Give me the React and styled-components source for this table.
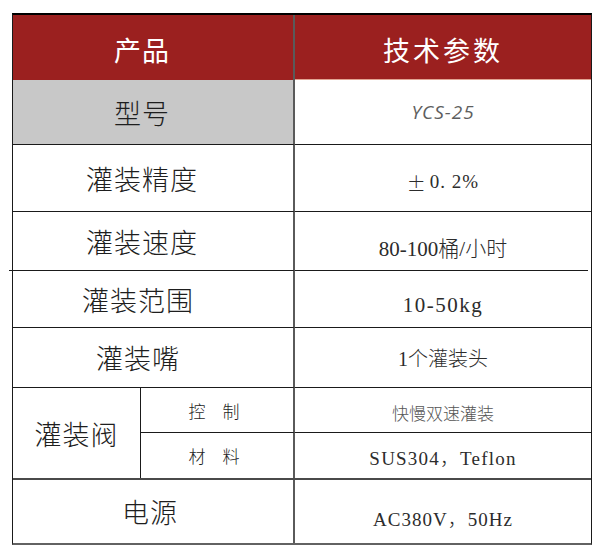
import React from 'react'
import styled, { createGlobalStyle } from 'styled-components'

const GlobalStyle = createGlobalStyle`
  html, body {
    margin: 0;
    padding: 0;
    background: #ffffff;
  }
  body {
    font-family: "Noto Sans CJK SC", "Noto Sans", sans-serif;
  }
`

const colors = {
  red: '#9b201f',
  gray: '#c8c8c8',
  divider: '#5a5a5a',
  line: '#1a1a1a',
  text: '#1e1e1e',
}

const rows = [
  { label: '灌装精度', sign: '±', value: '0. 2%', h: 67, size: 19, spacing: 1, shift: 22, dy: 4 },
  { label: '灌装速度', value: '80-100桶/小时', h: 59, size: 21, spacing: 0, shift: 22, dy: 5, tick: true },
  { label: '灌装范围', value: '10-50kg', h: 57, size: 21, spacing: 1.5, shift: 30, dy: 6 },
  { label: '灌装嘴', value: '1个灌装头', h: 60, size: 20, spacing: 0, shift: 30, dy: 0 },
]

const App = () => {
  return (
    <Page>
      <GlobalStyle />
      <Table>
        <HeadCell $span={2} $divider>
          <HeadText $shift={22}>产品</HeadText>
        </HeadCell>
        <HeadCell>
          <HeadText $spacing={3}>技术参数</HeadText>
        </HeadCell>

        <Label $span={2} $h={65} $shift={22} $bg={colors.gray}>型号</Label>
        <Value $h={65} $model>YCS-25</Value>

        {rows.map(row => (
          <React.Fragment key={row.label}>
            <Label $span={2} $h={row.h} $shift={row.shift} $tick={row.tick}>{row.label}</Label>
            <Value $h={row.h} $size={row.size} $spacing={row.spacing} $dy={row.dy} $short={row.tick}>
              {row.sign && <Sign>{row.sign}</Sign>}
              {row.value}
            </Value>
          </React.Fragment>
        ))}

        <ValveGroup>
          <Label $h={90} $grey>灌装阀</Label>
          <SubRows>
            <SubRow>
              <SubLabel>控　制</SubLabel>
              <Value $h={45} $size={17} $muted $dy={2}>快慢双速灌装</Value>
            </SubRow>
            <SubRow $grey>
              <SubLabel>材　料</SubLabel>
              <Value $h={45} $size={19} $spacing={1.2} $dy={1}>SUS304，Teflon</Value>
            </SubRow>
          </SubRows>
        </ValveGroup>

        <Label $span={2} $h={63} $shift={6} $last>电源</Label>
        <Value $h={63} $size={19} $spacing={1} $dy={6} $last>AC380V，50Hz</Value>
      </Table>
    </Page>
  )
}

export default App

const Page = styled.div`
  width: 612px;
  height: 552px;
  padding: 13px 0 0 12px;
  box-sizing: border-box;
`

const Table = styled.div`
  width: 580px;
  display: grid;
  grid-template-columns: 128px 154px 1fr;
  border-top: 2px solid #000;
  border-left: 1px solid ${colors.line};
  border-right: 1px solid ${colors.line};
  border-bottom: 2px solid #626262;
  box-sizing: border-box;
`

const HeadCell = styled.div`
  grid-column: span ${p => p.$span || 1};
  height: 65px;
  background: ${colors.red};
  display: flex;
  align-items: center;
  justify-content: center;
  border-right: ${p => (p.$divider ? `2px solid ${colors.divider}` : 'none')};
  box-shadow: ${p => (p.$divider ? 'none' : 'inset 0 -1px 0 #e2a493')};
`

const HeadText = styled.span`
  color: #ffffff;
  font-size: 27px;
  font-weight: 400;
  letter-spacing: ${p => p.$spacing || 1}px;
  margin-right: ${p => p.$shift || 0}px;
  margin-top: 4px;
`

const Sign = styled.span`
  font-family: "Noto Sans CJK SC", sans-serif;
  font-weight: 300;
  margin-right: 3px;
`

const Label = styled.div`
  position: relative;
  grid-column: span ${p => p.$span || 1};
  height: ${p => p.$h}px;
  box-sizing: border-box;
  background: ${p => p.$bg || '#ffffff'};
  border-right: ${p => (p.$span ? `2px solid ${colors.divider}` : `1px solid ${colors.line}`)};
  border-bottom: ${p => (p.$last || p.$grey ? 'none' : `1px solid ${colors.line}`)};
  display: flex;
  align-items: center;
  justify-content: center;
  padding-right: ${p => p.$shift || 0}px;
  font-size: 27px;
  font-weight: 300;
  letter-spacing: 1px;
  color: ${colors.text};

  &::after {
    content: '';
    display: ${p => (p.$tick ? 'block' : 'none')};
    position: absolute;
    left: -4px;
    bottom: -1px;
    width: 4px;
    height: 1px;
    background: ${colors.line};
  }
`

const Value = styled.div`
  position: relative;
  height: ${p => p.$h}px;
  box-sizing: border-box;
  border-bottom: ${p => (p.$last || p.$short ? 'none' : `1px solid ${colors.line}`)};
  display: flex;
  align-items: center;
  justify-content: center;
  padding-top: ${p => (p.$dy || 0) * 2}px;
  font-family: ${p => (p.$model ? '"Open Sans", "Noto Sans", sans-serif' : '"Liberation Serif", "Noto Sans CJK SC", serif')};
  font-style: ${p => (p.$model ? 'italic' : 'normal')};
  font-size: ${p => (p.$model ? 19 : p.$size || 20)}px;
  letter-spacing: ${p => (p.$model ? 1 : p.$spacing || 0)}px;
  color: ${p => (p.$model ? '#5e5e5e' : p.$muted ? '#555555' : '#2c2c2c')};
  font-weight: ${p => (p.$model ? 400 : 300)};

  &::after {
    content: '';
    display: ${p => (p.$short ? 'block' : 'none')};
    position: absolute;
    left: 0;
    right: 3px;
    bottom: 0;
    height: 1px;
    background: ${colors.line};
  }
`

const ValveGroup = styled.div`
  grid-column: 1 / -1;
  display: grid;
  grid-template-columns: 128px 1fr;
  border-bottom: 2px solid #4a4a4a;
`

const SubRows = styled.div`
  display: flex;
  flex-direction: column;
`

const SubRow = styled.div`
  display: grid;
  grid-template-columns: 154px 1fr;

  & > div:last-child {
    border-bottom: ${p => (p.$grey ? 'none' : `1px solid ${colors.line}`)};
  }
`

const SubLabel = styled.div`
  height: 45px;
  box-sizing: border-box;
  border-right: 2px solid ${colors.divider};
  border-bottom: 1px solid ${colors.line};
  display: flex;
  align-items: center;
  justify-content: center;
  padding-right: 6px;
  font-size: 17px;
  font-weight: 300;
  color: ${colors.text};

  ${SubRow}:last-child & {
    border-bottom: none;
  }
`
